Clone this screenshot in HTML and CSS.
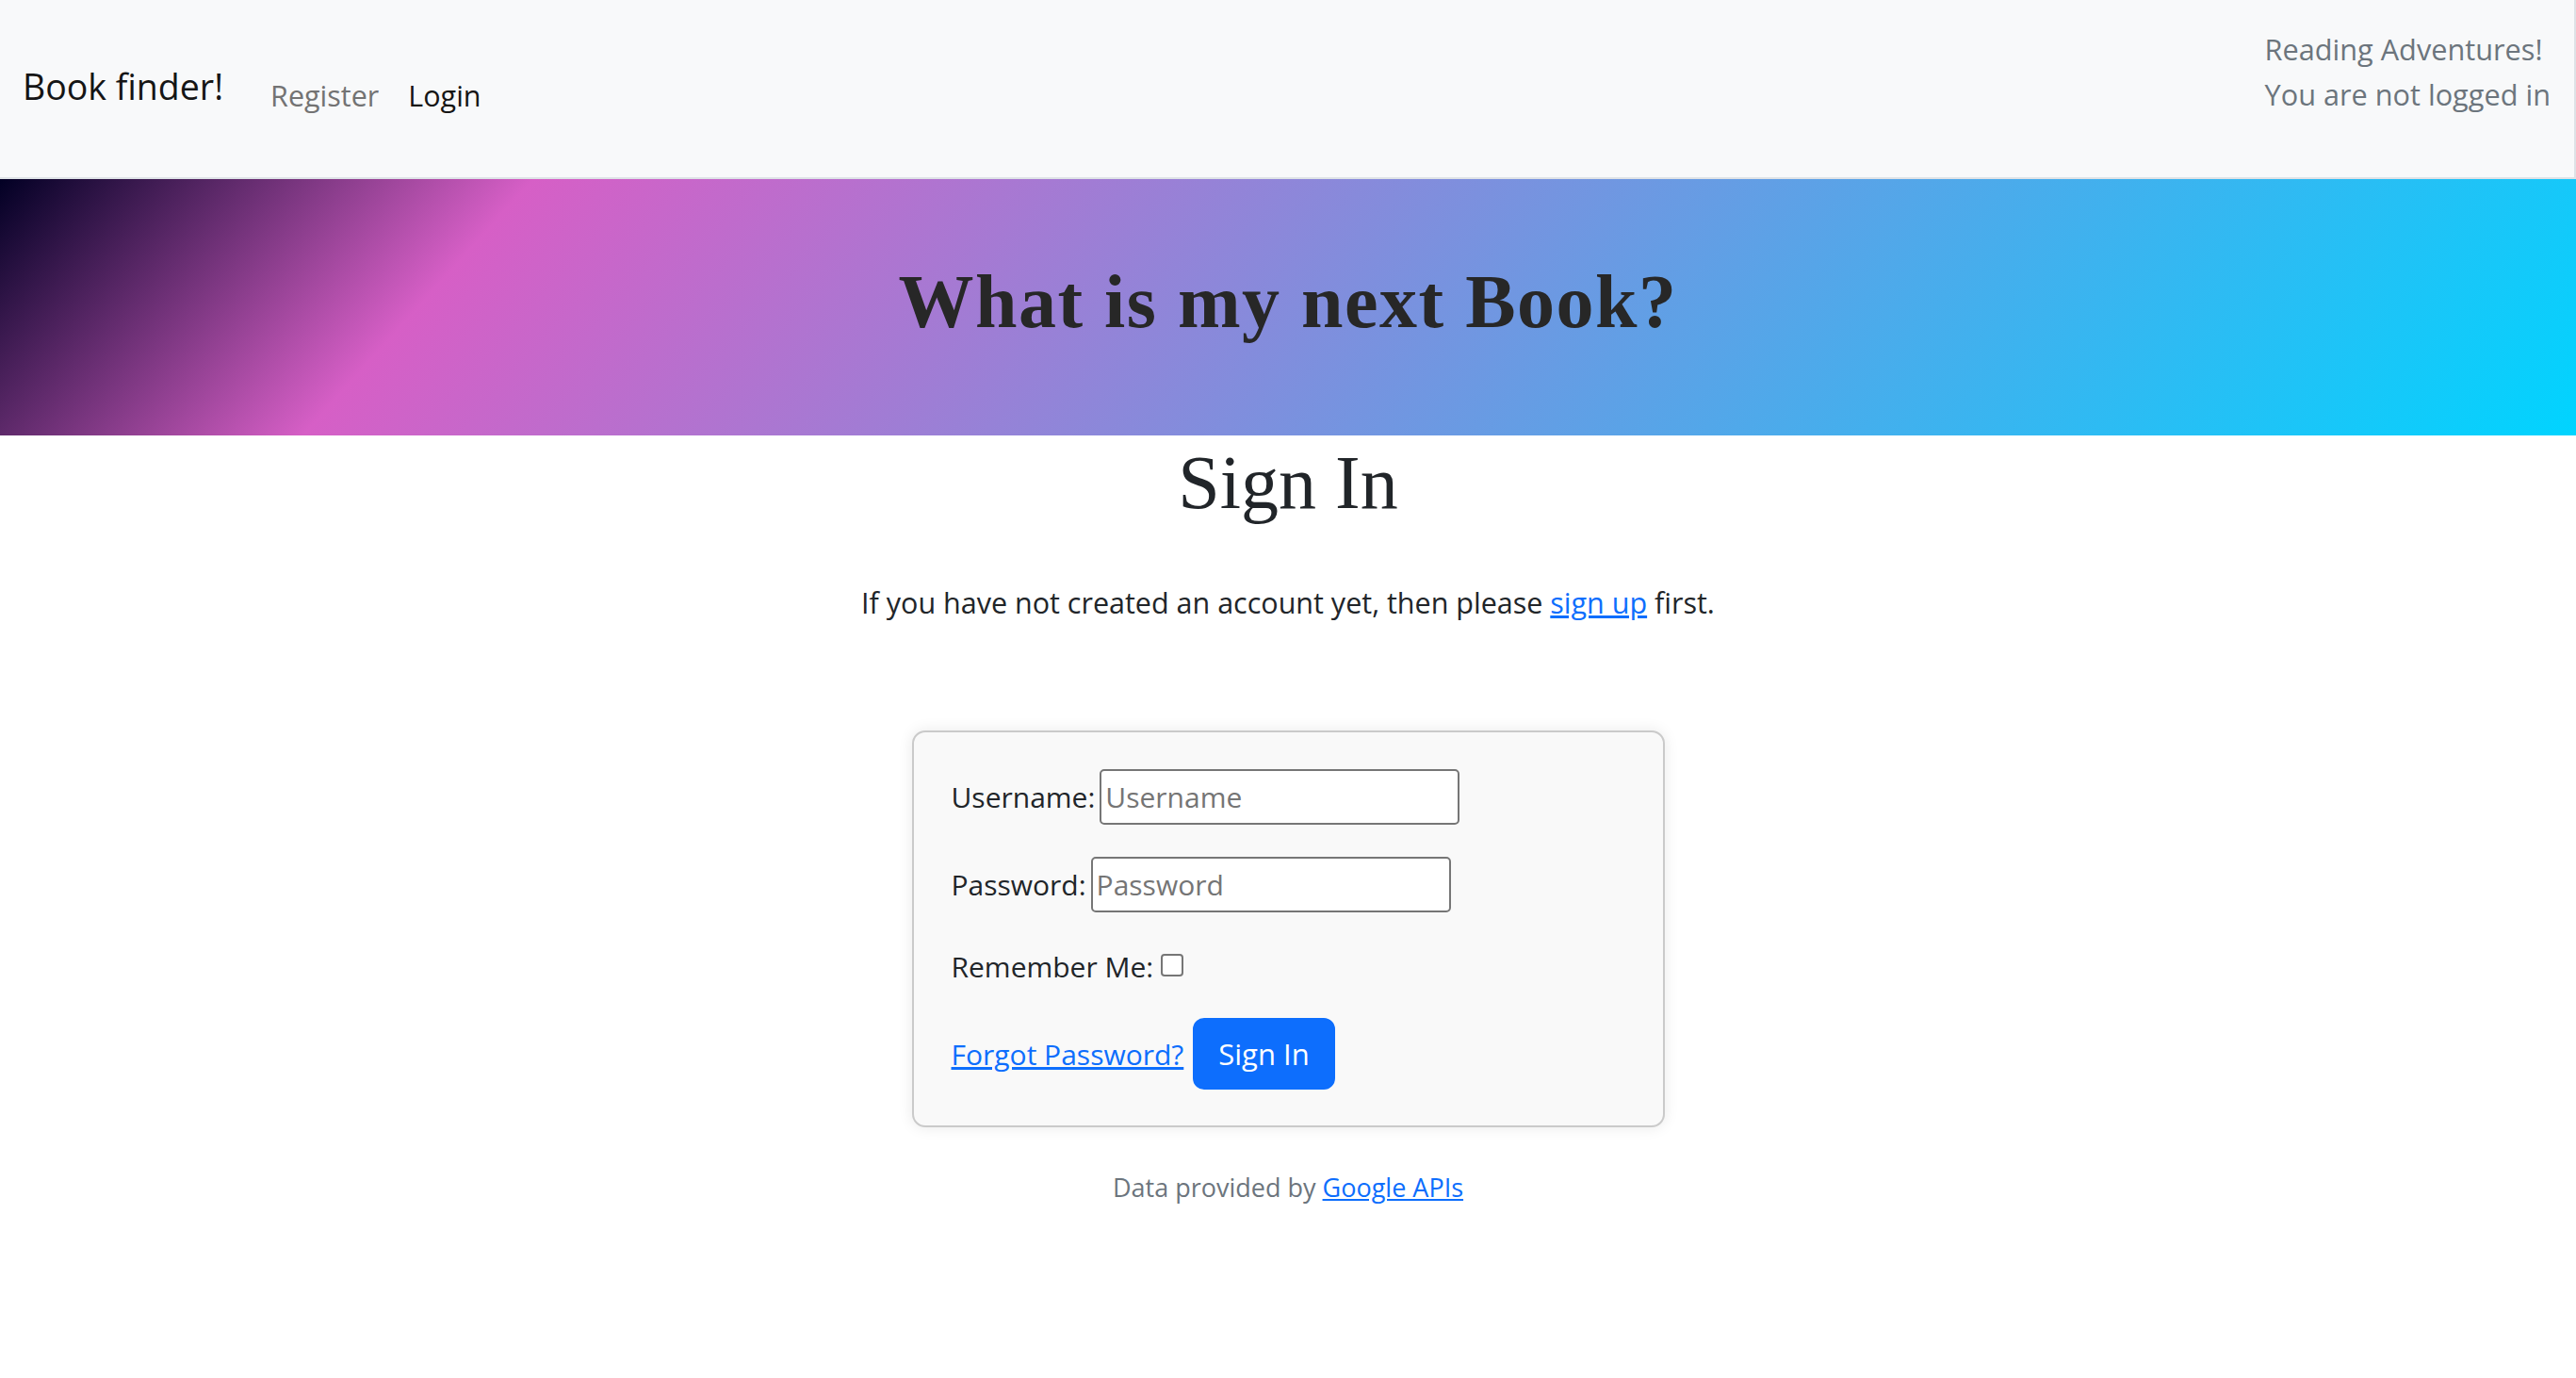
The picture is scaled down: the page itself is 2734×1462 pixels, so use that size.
FILE: index.html
```html
<!DOCTYPE html>
<html lang="en">
<head>
<meta charset="utf-8">
<title>Book finder! - Sign In</title>
<link rel="stylesheet" href="styles.css">
</head>
<body>
<header class="navbar">
  <a class="brand" href="#">Book finder!</a>
  <nav class="nav">
    <a class="nav-link" href="#">Register</a>
    <a class="nav-link active" href="#">Login</a>
  </nav>
  <div class="status">
    <div>Reading Adventures!</div>
    <div>You are not logged in</div>
  </div>
</header>
<section class="hero">
  <h1 class="hero-title">What is my next Book?</h1>
</section>
<main class="main">
  <h1 class="page-title">Sign In</h1>
  <p class="intro">If you have not created an account yet, then please <a href="#">sign up</a> first.</p>
  <form class="card">
    <div class="row">
      <label for="id_login">Username:</label>
      <input class="field" type="text" id="id_login" placeholder="Username">
    </div>
    <div class="row">
      <label for="id_password">Password:</label>
      <input class="field" type="password" id="id_password" placeholder="Password">
    </div>
    <div class="row row-check">
      <label for="id_remember">Remember Me:</label>
      <input class="check" type="checkbox" id="id_remember">
    </div>
    <div class="row row-actions">
      <a href="#">Forgot Password?</a>
      <button class="btn" type="submit">Sign In</button>
    </div>
  </form>
  <p class="footer">Data provided by <a href="#">Google APIs</a></p>
</main>
</body>
</html>
```
FILE: styles.css
```css
html, body {
  margin: 0;
  padding: 0;
}
body {
  font-family: "Open Sans", "Noto Sans", sans-serif;
  font-size: 30px;
  line-height: 1.5;
  color: #212529;
  background: #ffffff;
}
a {
  color: #0d6efd;
  text-decoration: underline;
}
.navbar {
  display: flex;
  align-items: flex-start;
  height: 190px;
  box-sizing: border-box;
  background: #f8f9fa;
  border-bottom: 2px solid #dee2e6;
  border-right: 2px solid #dee2e6;
  padding: 0 25px 0 24px;
}
.brand {
  font-size: 37.5px;
  line-height: 54px;
  margin-top: 65px;
  color: #151515;
  text-decoration: none;
}
.nav {
  display: flex;
  margin-top: 79px;
  margin-left: 50px;
  gap: 31px;
  font-size: 30.5px;
  line-height: 44px;
}
.nav-link {
  color: #737373;
  text-decoration: none;
}
.nav-link.active {
  color: #151515;
}
.status {
  margin-left: auto;
  margin-top: 28px;
  font-size: 30.7px;
  line-height: 48px;
  color: #6c757d;
}
.hero {
  height: 272px;
  box-sizing: border-box;
  padding-top: 82px;
  background: linear-gradient(132deg, #020024 0%, #d65fc6 19%, #00d4ff 100%);
  text-align: center;
}
.hero-title {
  margin: 0;
  font-family: "Liberation Serif", "Times New Roman", serif;
  font-weight: 700;
  font-size: 80px;
  line-height: 96px;
  letter-spacing: 1.5px;
  color: #272727;
}
.main {
  display: flex;
  flex-direction: column;
  align-items: center;
}
.page-title {
  margin: 3px 0 0;
  font-family: "Liberation Serif", "Times New Roman", serif;
  font-weight: 400;
  font-size: 80px;
  line-height: 95px;
  color: #212529;
}
.intro {
  margin: 58px 0 0;
  font-size: 30.5px;
  line-height: 43px;
}
.card {
  margin-top: 114px;
  width: 799px;
  box-sizing: border-box;
  padding: 39px 40px 38px;
  background: #f9f9f9;
  border: 2px solid #cacaca;
  border-radius: 14px;
  box-shadow: 0 0 16px rgba(0, 0, 0, 0.09);
  display: flex;
  flex-direction: column;
  gap: 34px;
}
.row {
  display: flex;
  align-items: baseline;
  gap: 5px;
}
.row label {
  line-height: 43px;
}
.field {
  width: 382px;
  height: 59px;
  box-sizing: border-box;
  padding: 2px 4px;
  border: 2px solid #767676;
  border-radius: 5px;
  font-family: "Open Sans", "Noto Sans", sans-serif;
  font-size: 30px;
  color: #212529;
  background: #ffffff;
}
.field::placeholder {
  color: #757575;
}
.row-check {
  align-items: center;
  height: 46px;
  gap: 8px;
}
.check {
  appearance: none;
  -webkit-appearance: none;
  width: 24px;
  height: 24px;
  margin: -2px 0 0;
  box-sizing: border-box;
  border: 2px solid #767676;
  border-radius: 4px;
  background: #ffffff;
}
.row-actions {
  align-items: center;
  gap: 10px;
  margin-top: -2px;
}
.btn {
  height: 76px;
  box-sizing: border-box;
  padding: 0 25px;
  border: 2px solid #0d6efd;
  border-radius: 12px;
  background: #0d6efd;
  color: #ffffff;
  font-family: "Open Sans", "Noto Sans", sans-serif;
  font-size: 31px;
  line-height: 1;
}
.footer {
  margin: 45px 0 0;
  font-size: 27px;
  line-height: 37px;
  color: #6c757d;
}
```
